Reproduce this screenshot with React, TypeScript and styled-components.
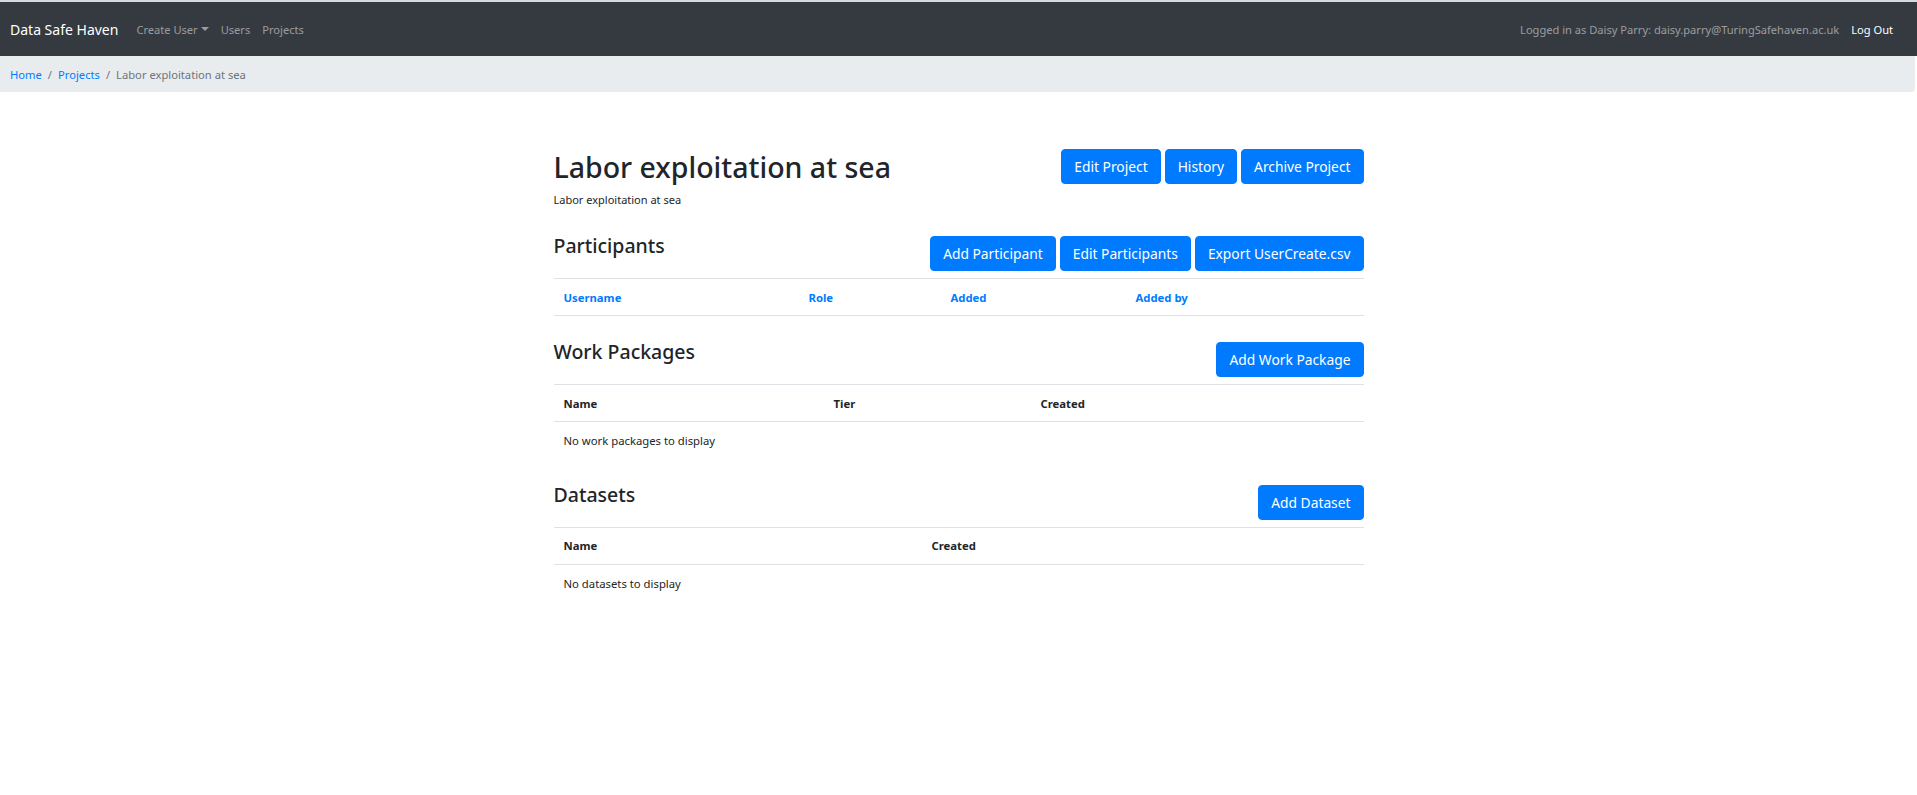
import React from 'react';
import styled, { createGlobalStyle } from 'styled-components';

const GlobalStyle = createGlobalStyle`
  html, body {
    margin: 0;
    padding: 0;
    background: #fff;
  }
  body {
    font-family: 'Noto Sans', 'Open Sans', sans-serif;
    color: #212529;
    border-top: 2px solid #d6d8db;
  }
  * {
    box-sizing: border-box;
  }
`;

const Navbar = styled.nav`
  display: flex;
  align-items: center;
  justify-content: space-between;
  height: 54px;
  padding: 0 18px 0 10px;
  background-color: #343a40;
`;

const NavGroup = styled.div`
  display: flex;
  align-items: center;
`;

const Brand = styled.a`
  font-size: 14px;
  color: #fff;
  margin-right: 12px;
  text-decoration: none;
`;

const NavLink = styled.a<{ $light?: boolean }>`
  display: flex;
  align-items: center;
  padding: 0 6px;
  font-size: 11.1px;
  color: ${(p) => (p.$light ? '#fff' : 'rgba(255, 255, 255, 0.5)')};
  text-decoration: none;
  cursor: pointer;
`;

const Caret = styled.span`
  display: inline-block;
  margin-left: 3px;
  border-top: 4px solid currentColor;
  border-left: 4px solid transparent;
  border-right: 4px solid transparent;
`;

const NavText = styled.span`
  font-size: 11.1px;
  color: rgba(255, 255, 255, 0.5);
  margin-right: 6px;
`;

const Breadcrumb = styled.ol`
  display: flex;
  align-items: center;
  height: 36px;
  margin: 0 2px 0 0;
  padding: 0 10px;
  list-style: none;
  background-color: #e9ecef;
  border-radius: 0 0 4px 0;
  font-size: 11.2px;
`;

const Crumb = styled.li<{ $active?: boolean }>`
  color: ${(p) => (p.$active ? '#6c757d' : '#007bff')};

  &:not(:first-child)::before {
    content: '/';
    color: #6c757d;
    padding: 0 6px;
  }
`;

const Main = styled.main`
  width: 810px;
  margin: 0 auto;
  padding-top: 57px;
`;

const HeaderRow = styled.div`
  display: flex;
  justify-content: space-between;
  align-items: flex-start;
`;

const Title = styled.h1`
  margin: 0;
  font-size: 28.5px;
  font-weight: 500;
  line-height: 36px;
`;

const Subtitle = styled.p`
  margin: 7px 0 0;
  font-size: 11px;
  line-height: 16px;
`;

const ButtonGroup = styled.div`
  display: flex;
  gap: 4px;
`;

const Button = styled.button`
  height: 35px;
  padding: 0 12px;
  border: 1px solid #007bff;
  border-radius: 4px;
  background-color: #007bff;
  color: #fff;
  font-family: inherit;
  font-size: 13.8px;
  cursor: pointer;
`;

const Section = styled.section<{ $top: number }>`
  margin-top: ${(p) => p.$top}px;
`;

const SectionHeading = styled.h3`
  margin: -3px 0 0;
  font-size: 19.5px;
  font-weight: 500;
  line-height: 26px;
`;

const Table = styled.table`
  width: 100%;
  margin-top: 7px;
  border-collapse: collapse;
  font-size: 11.3px;
`;

const Th = styled.th<{ $link?: boolean }>`
  height: 37px;
  padding: 0 10px;
  text-align: left;
  font-weight: 700;
  color: ${(p) => (p.$link ? '#007bff' : '#212529')};
  border-top: 1px solid #dee2e6;
  border-bottom: 1px solid #dee2e6;
`;

const Td = styled.td`
  height: 38px;
  padding: 0 10px;
`;

type Column = { label: string; width: number };

interface SectionProps {
  title: string;
  top: number;
  buttons: string[];
  columns: Column[];
  linkHeaders?: boolean;
  empty?: string;
}

const DataSection = ({ title, top, buttons, columns, linkHeaders, empty }: SectionProps) => (
  <Section $top={top}>
    <HeaderRow>
      <SectionHeading>{title}</SectionHeading>
      <ButtonGroup>
        {buttons.map((b) => (
          <Button key={b}>{b}</Button>
        ))}
      </ButtonGroup>
    </HeaderRow>
    <Table>
      <colgroup>
        {columns.map((c) => (
          <col key={c.label} style={{ width: c.width }} />
        ))}
      </colgroup>
      <thead>
        <tr>
          {columns.map((c) => (
            <Th key={c.label} $link={linkHeaders}>
              {c.label}
            </Th>
          ))}
        </tr>
      </thead>
      {empty && (
        <tbody>
          <tr>
            <Td colSpan={columns.length}>{empty}</Td>
          </tr>
        </tbody>
      )}
    </Table>
  </Section>
);

const App = () => (
  <>
    <GlobalStyle />
    <Navbar>
      <NavGroup>
        <Brand>Data Safe Haven</Brand>
        <NavLink>
          Create User
          <Caret />
        </NavLink>
        <NavLink>Users</NavLink>
        <NavLink>Projects</NavLink>
      </NavGroup>
      <NavGroup>
        <NavText>Logged in as Daisy Parry: daisy.parry@TuringSafehaven.ac.uk</NavText>
        <NavLink $light>Log Out</NavLink>
      </NavGroup>
    </Navbar>
    <Breadcrumb>
      <Crumb>Home</Crumb>
      <Crumb>Projects</Crumb>
      <Crumb $active>Labor exploitation at sea</Crumb>
    </Breadcrumb>
    <Main>
      <HeaderRow>
        <div>
          <Title>Labor exploitation at sea</Title>
          <Subtitle>Labor exploitation at sea</Subtitle>
        </div>
        <ButtonGroup>
          <Button>Edit Project</Button>
          <Button>History</Button>
          <Button>Archive Project</Button>
        </ButtonGroup>
      </HeaderRow>
      <DataSection
        title="Participants"
        top={28}
        buttons={['Add Participant', 'Edit Participants', 'Export UserCreate.csv']}
        linkHeaders
        columns={[
          { label: 'Username', width: 245 },
          { label: 'Role', width: 142 },
          { label: 'Added', width: 185 },
          { label: 'Added by', width: 238 },
        ]}
      />
      <DataSection
        title="Work Packages"
        top={26}
        buttons={['Add Work Package']}
        columns={[
          { label: 'Name', width: 270 },
          { label: 'Tier', width: 207 },
          { label: 'Created', width: 333 },
        ]}
        empty="No work packages to display"
      />
      <DataSection
        title="Datasets"
        top={25}
        buttons={['Add Dataset']}
        columns={[
          { label: 'Name', width: 368 },
          { label: 'Created', width: 442 },
        ]}
        empty="No datasets to display"
      />
    </Main>
  </>
);

export default App;
